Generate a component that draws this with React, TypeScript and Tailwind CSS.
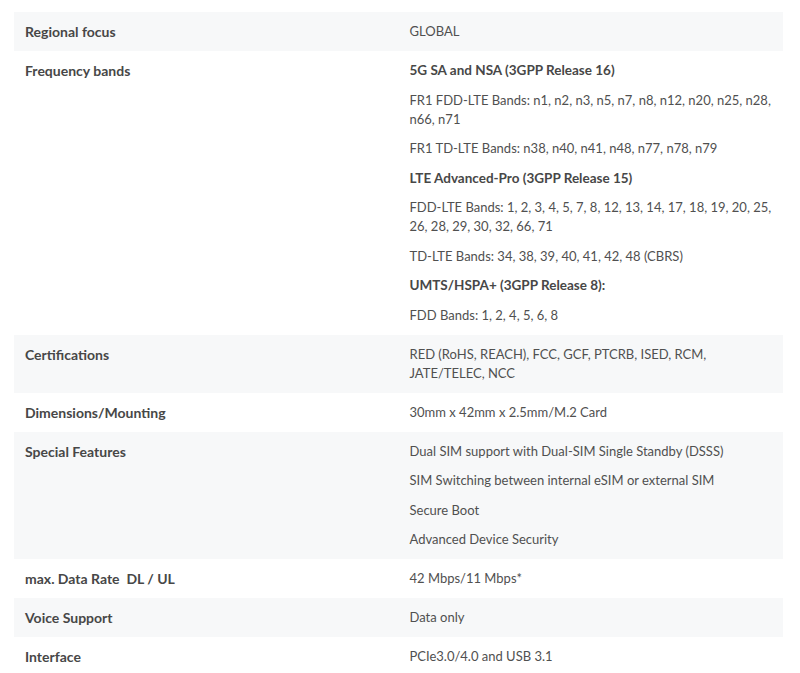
import React from 'react';

type Spec = {
  label: string;
  values: { text: string; bold?: boolean }[];
};

const specs: Spec[] = [
  { label: 'Regional focus', values: [{ text: 'GLOBAL' }] },
  {
    label: 'Frequency bands',
    values: [
      { text: '5G SA and NSA (3GPP Release 16)', bold: true },
      { text: 'FR1 FDD-LTE Bands: n1, n2, n3, n5, n7, n8, n12, n20, n25, n28, n66, n71' },
      { text: 'FR1 TD-LTE Bands: n38, n40, n41, n48, n77, n78, n79' },
      { text: 'LTE Advanced-Pro (3GPP Release 15)', bold: true },
      { text: 'FDD-LTE Bands: 1, 2, 3, 4, 5, 7, 8, 12, 13, 14, 17, 18, 19, 20, 25, 26, 28, 29, 30, 32, 66, 71' },
      { text: 'TD-LTE Bands: 34, 38, 39, 40, 41, 42, 48 (CBRS)' },
      { text: 'UMTS/HSPA+ (3GPP Release 8):', bold: true },
      { text: 'FDD Bands: 1, 2, 4, 5, 6, 8' },
    ],
  },
  { label: 'Certifications', values: [{ text: 'RED (RoHS, REACH), FCC, GCF, PTCRB, ISED, RCM, JATE/TELEC, NCC' }] },
  { label: 'Dimensions/Mounting', values: [{ text: '30mm x 42mm x 2.5mm/M.2 Card' }] },
  {
    label: 'Special Features',
    values: [
      { text: 'Dual SIM support with Dual-SIM Single Standby (DSSS)' },
      { text: 'SIM Switching between internal eSIM or external SIM' },
      { text: 'Secure Boot' },
      { text: 'Advanced Device Security' },
    ],
  },
  { label: 'max. Data Rate\u00a0 DL / UL', values: [{ text: '42 Mbps/11 Mbps*' }] },
  { label: 'Voice Support', values: [{ text: 'Data only' }] },
  { label: 'Interface', values: [{ text: 'PCIe3.0/4.0 and USB 3.1' }] },
];

const App: React.FC = () => {
  return (
    <div className="min-h-screen bg-white pl-[14px] pr-[17px] pt-[12px] font-['Lato',sans-serif] text-[13px] leading-[19px] text-[#505050]">
      <table className="w-full table-fixed border-collapse">
        <tbody>
          {specs.map((row, i) => (
            <tr key={row.label} className={i % 2 === 0 ? 'bg-[#f7f8f9]' : 'bg-white'}>
              <td className="w-1/2 px-[11px] py-[10px] align-top text-[14px] font-bold text-[#474747]">{row.label}</td>
              <td className="w-1/2 px-[11px] py-[10px] align-top">
                <div className="flex flex-col gap-[10.5px]">
                  {row.values.map(v => (
                    <p key={v.text} className={v.bold ? 'text-[13.5px] font-bold text-[#474747]' : ''}>
                      {v.text}
                    </p>
                  ))}
                </div>
              </td>
            </tr>
          ))}
        </tbody>
      </table>
    </div>
  );
};

export default App;
